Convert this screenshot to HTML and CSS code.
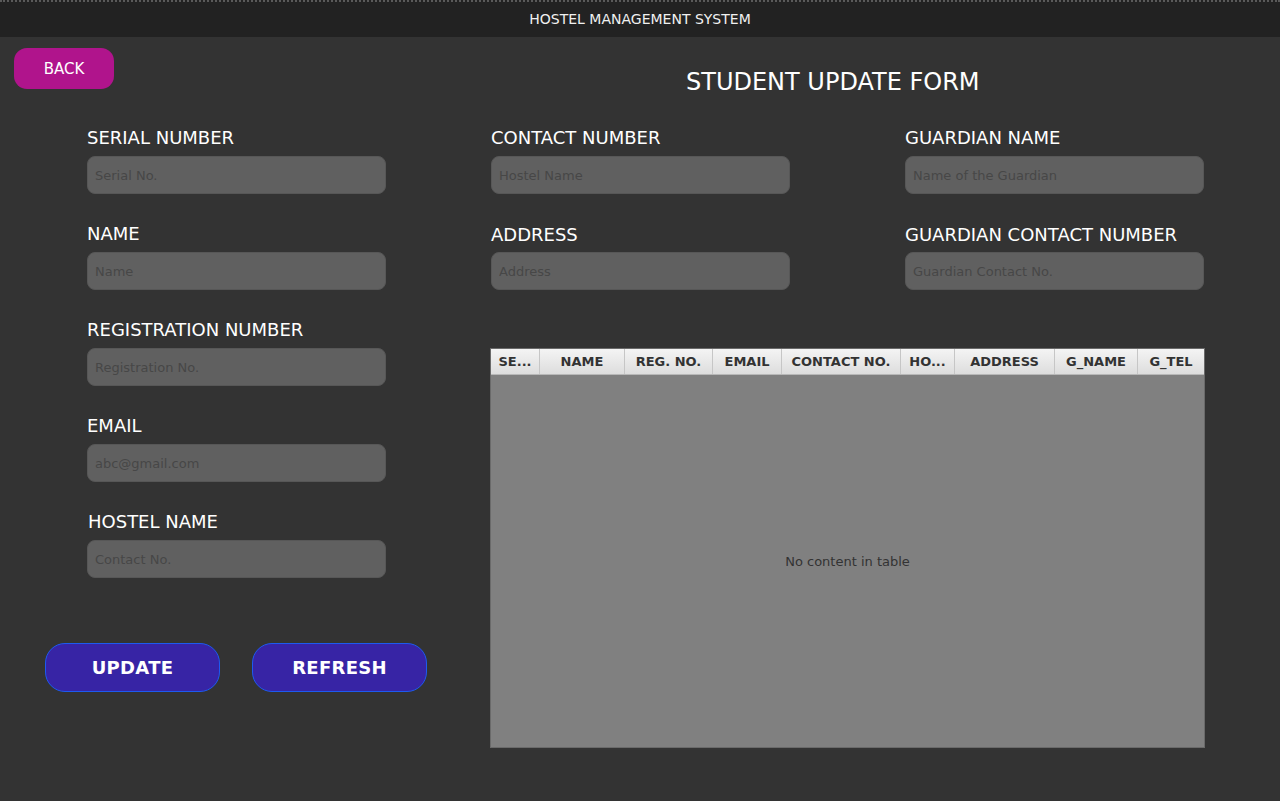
FILE: index.html
```html
<!DOCTYPE html>
<html>
<head>
<meta charset="utf-8">
<title>Hostel Management System</title>
<link rel="stylesheet" href="styles.css">
</head>
<body>
<div class="app">
  <header class="topbar">HOSTEL MANAGEMENT SYSTEM</header>
  <div class="content">
    <div class="left">
      <button class="back">BACK</button>
      <div class="fields">
        <div class="field">
          <label class="lbl">SERIAL NUMBER</label>
          <input class="inp" placeholder="Serial No.">
        </div>
        <div class="field">
          <label class="lbl">NAME</label>
          <input class="inp" placeholder="Name">
        </div>
        <div class="field">
          <label class="lbl">REGISTRATION NUMBER</label>
          <input class="inp" placeholder="Registration No.">
        </div>
        <div class="field">
          <label class="lbl">EMAIL</label>
          <input class="inp" placeholder="abc@gmail.com">
        </div>
        <div class="field">
          <label class="lbl shift">HOSTEL NAME</label>
          <input class="inp" placeholder="Contact No.">
        </div>
      </div>
      <div class="actions">
        <button class="act">UPDATE</button>
        <button class="act">REFRESH</button>
      </div>
    </div>
    <div class="right">
      <h1 class="title">STUDENT UPDATE FORM</h1>
      <div class="grid">
        <div class="field">
          <label class="lbl">CONTACT NUMBER</label>
          <input class="inp" placeholder="Hostel Name">
        </div>
        <div class="field">
          <label class="lbl">GUARDIAN NAME</label>
          <input class="inp" placeholder="Name of the Guardian">
        </div>
        <div class="field low">
          <label class="lbl">ADDRESS</label>
          <input class="inp" placeholder="Address">
        </div>
        <div class="field low">
          <label class="lbl">GUARDIAN CONTACT NUMBER</label>
          <input class="inp" placeholder="Guardian Contact No.">
        </div>
      </div>
      <div class="table">
        <div class="thead">
          <div class="th c1">SE...</div>
          <div class="th c2">NAME</div>
          <div class="th c3">REG. NO.</div>
          <div class="th c4">EMAIL</div>
          <div class="th c5">CONTACT NO.</div>
          <div class="th c6">HO...</div>
          <div class="th c7">ADDRESS</div>
          <div class="th c8">G_NAME</div>
          <div class="th c9">G_TEL</div>
        </div>
        <div class="tbody">No content in table</div>
      </div>
    </div>
  </div>
</div>
</body>
</html>
```

FILE: styles.css
```css
* { box-sizing: border-box; }
html, body { margin: 0; padding: 0; }
body {
  width: 1280px;
  height: 801px;
  overflow: hidden;
  background: #333333;
  font-family: "DejaVu Sans", "Liberation Sans", sans-serif;
}
.app { display: flex; flex-direction: column; height: 801px; }
.topbar {
  height: 37px;
  background: #222222;
  border-top: 2px dotted #5a5a5a;
  color: #f0f0f0;
  font-size: 14px;
  display: flex;
  align-items: center;
  justify-content: center;
  padding-bottom: 1px;
}
.content { display: flex; flex: 1; }
.left { width: 490px; display: flex; flex-direction: column; }
.back {
  margin: 11px 0 0 14px;
  width: 100px;
  height: 41px;
  border: none;
  border-radius: 13px;
  background: #b0148c;
  color: #ffffff;
  font-family: inherit;
  font-size: 15px;
}
.fields {
  margin-top: 39px;
  padding-left: 86px;
  display: flex;
  flex-direction: column;
  gap: 30px;
}
.field { display: flex; flex-direction: column; gap: 8px; }
.lbl {
  color: #ffffff;
  font-size: 18px;
  line-height: 20px;
  height: 20px;
  padding-left: 1px;
}
.lbl.shift { padding-left: 2px; }
.inp {
  width: 299px;
  height: 38px;
  margin-left: 1px;
  background: #606060;
  border: 1px solid #575757;
  border-radius: 8px;
  padding: 0 7px;
  font-family: inherit;
  font-size: 13px;
  color: #ffffff;
  outline: none;
}
.inp::placeholder { color: #474747; }
.actions {
  margin-top: 65px;
  padding-left: 45px;
  display: flex;
  gap: 32px;
}
.act {
  width: 175px;
  height: 49px;
  background: #3724a5;
  border: 1px solid #1d5af0;
  border-radius: 20px;
  color: #ffffff;
  font-family: inherit;
  font-weight: bold;
  font-size: 18px;
  letter-spacing: 0.3px;
}
.right { flex: 1; display: flex; flex-direction: column; }
.title {
  margin: 32px 0 0 196px;
  height: 26px;
  font-size: 24px;
  line-height: 26px;
  font-weight: normal;
  color: #ffffff;
}
.grid {
  margin-top: 33px;
  display: grid;
  grid-template-columns: 299px 299px;
  column-gap: 115px;
  row-gap: 31px;
}
.grid .field.low { gap: 7px; }
.table {
  margin-top: 58px;
  width: 715px;
  height: 400px;
  display: flex;
  flex-direction: column;
  border: 1px solid #6a6a6a;
}
.thead {
  height: 26px;
  display: flex;
  background: linear-gradient(#f4f4f4, #dddddd);
  border-bottom: 1px solid #b8b8b8;
}
.th {
  font-size: 13px;
  font-weight: bold;
  color: #333333;
  display: flex;
  align-items: center;
  justify-content: center;
  border-right: 1px solid #c6c6c6;
  white-space: nowrap;
}
.c1 { width: 49px; }
.c2 { width: 85px; }
.c3 { width: 88px; }
.c4 { width: 69px; }
.c5 { width: 119px; }
.c6 { width: 54px; }
.c7 { width: 100px; }
.c8 { width: 83px; }
.c9 { flex: 1; border-right: none; }
.tbody {
  flex: 1;
  background: #808080;
  color: #333333;
  font-size: 13px;
  display: flex;
  align-items: center;
  justify-content: center;
}
```
